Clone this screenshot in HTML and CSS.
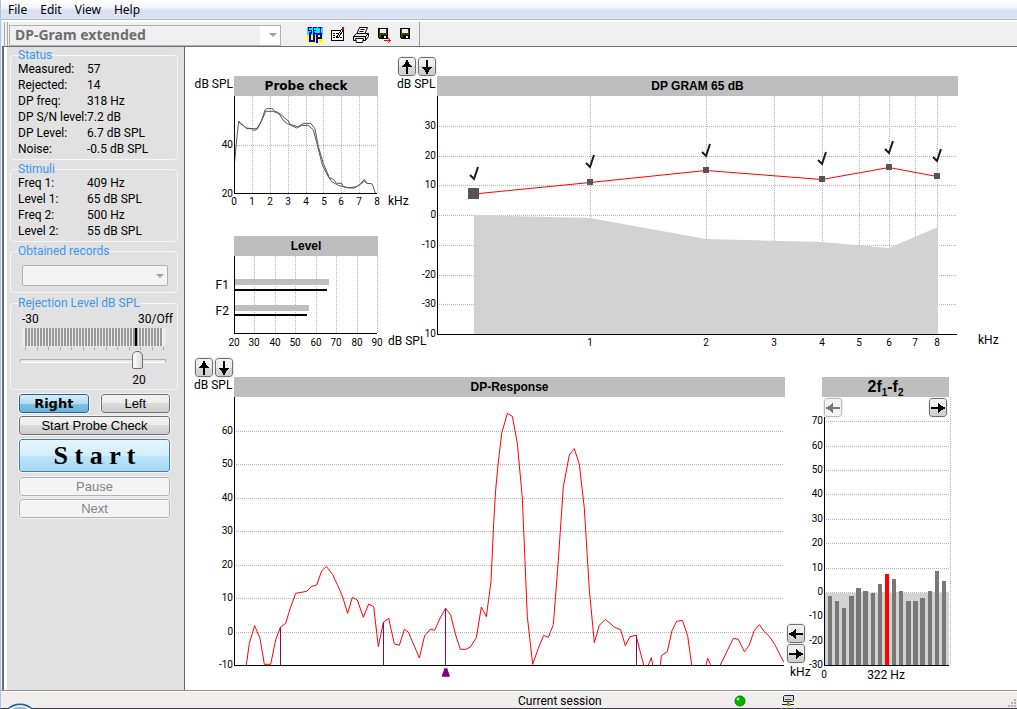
FILE: index.html
```html
<!DOCTYPE html>
<html lang="en">
<head>
<meta charset="utf-8">
<meta name="viewport" content="width=device-width, initial-scale=1">
<title>DP-Gram extended</title>
<link rel="stylesheet" href="styles.css">
</head>
<body>
<svg class="defs" aria-hidden="true">
  <symbol id="arrow-v" viewBox="0 0 16 16"><path d="M7 15V8H3V7h1V6h1V5h1V3h1V1h2v2h1v2h1v1h1v1h1v1H9v7z"/></symbol>
  <symbol id="arrow-h" viewBox="0 0 16 16"><path d="M15 7H8V3H7v1H6v1H5v1H3v1H1v2h2v1h2v1h1v1h1v1h1V9h7z"/></symbol>
</svg>

<nav class="menubar" aria-label="Main menu">
  <button type="button">File</button>
  <button type="button">Edit</button>
  <button type="button">View</button>
  <button type="button">Help</button>
</nav>

<div class="toolbar">
  <div class="combo combo-main">
    <select aria-label="Test type" disabled><option>DP-Gram extended</option></select>
    <span class="caret"></span>
  </div>
  <div class="tools">
    <button type="button" aria-label="Setup">
      <svg width="16" height="16" viewBox="0 0 16 16" shape-rendering="crispEdges"><path fill="#00f0ff" d="M0 0h16v8H0z"/><path fill="#ff0" d="M0 8h16v8H0z"/><path fill="none" stroke="#0000a8" stroke-width="1" d="M4.5.5h-3v3h3v3h-3M6 .5h3.500M6 .5v6h4M6 3.500h3M11 .5h4M13 .5v6"/><path fill="none" stroke="#0000c0" stroke-width="2" d="M3 5v9h4V5M10 16V7h4v4h-4"/></svg>
    </button>
    <button type="button" aria-label="Edit report">
      <svg width="16" height="16" viewBox="0 0 16 16" shape-rendering="crispEdges"><path fill="#fff" stroke="#000" d="M1.500 3.500h12v10h-12z"/><path stroke="#000" d="M3 6.500h2m1 0h2M3 8.500h2M3 10.500h2m5 0h2"/><path stroke="#000" stroke-width="3" d="M13 2L7 11"/><path stroke="#ffef60" d="M12.500 2.500L8 9.500"/><path fill="#e00000" d="M12 0h2v3h-2z"/></svg>
    </button>
    <button type="button" aria-label="Print">
      <svg width="17" height="16" viewBox="0 0 17 16"><path fill="#fff" stroke="#000" d="M4 6.500L6.500.5h8L12 6.500z"/><path stroke="#000" d="M7.500 2.500h4M6.500 4.500h4"/><path fill="#e4e4e4" stroke="#000" d="M.5 9.500l3-3h12v3l-3 4H.5z"/><path fill="none" stroke="#000" d="M1 9.500h11.500v4M12.500 9.500l3-3"/><path fill="#fff" stroke="#000" d="M2.500 11.500h8l-1 4h-6z"/></svg>
    </button>
    <button type="button" aria-label="Save as">
      <svg width="16" height="16" viewBox="0 0 16 16" shape-rendering="crispEdges"><path fill="#444400" stroke="#000" d="M1.500 1.500h9v10h-8l-1-1z"/><path fill="#eee" d="M3 2h6v4H3z"/><path fill="#000" d="M4 8h6v4H4z"/><path fill="#fff" d="M7 9h2v2H7z"/><path fill="none" stroke="red" d="M7 13.500h7M11 11l2.500 2.500L11 16"/></svg>
    </button>
    <button type="button" aria-label="Save">
      <svg width="12" height="16" viewBox="0 0 12 16" shape-rendering="crispEdges"><path fill="#444400" stroke="#000" d="M.5 1.500h9v10h-8l-1-1z"/><path fill="#eee" d="M2 2h6v4H2z"/><path fill="#000" d="M3 8h6v4H3z"/><path fill="#fff" d="M6 9h2v2H6z"/></svg>
    </button>
  </div>
</div>

<main class="workspace">
  <aside class="sidebar">
    <fieldset>
      <legend>Status</legend>
      <dl>
        <dt>Measured:</dt><dd>57</dd>
        <dt>Rejected:</dt><dd>14</dd>
        <dt>DP freq:</dt><dd>318 Hz</dd>
        <dt>DP S/N level:</dt><dd>7.2 dB</dd>
        <dt>DP Level:</dt><dd>6.7 dB SPL</dd>
        <dt>Noise:</dt><dd>-0.5 dB SPL</dd>
      </dl>
    </fieldset>
    <fieldset>
      <legend>Stimuli</legend>
      <dl>
        <dt>Freq 1:</dt><dd>409 Hz</dd>
        <dt>Level 1:</dt><dd>65 dB SPL</dd>
        <dt>Freq 2:</dt><dd>500 Hz</dd>
        <dt>Level 2:</dt><dd>55 dB SPL</dd>
      </dl>
    </fieldset>
    <fieldset class="records">
      <legend>Obtained records</legend>
      <div class="combo">
        <select aria-label="Obtained records" disabled><option></option></select>
        <span class="caret"></span>
      </div>
    </fieldset>
    <fieldset class="rejection">
      <legend><label for="rejection">Rejection Level dB SPL</label></legend>
      <div class="range-ends"><span>-30</span><span>30/Off</span></div>
      <div class="meter"><i></i></div>
      <div class="scale"><i></i><i></i><i></i><i></i><i></i><i></i><i></i><i></i><i></i><i></i><i></i><i></i><i></i></div>
      <input id="rejection" type="range" min="-30" max="30" value="20">
      <output for="rejection">20</output>
    </fieldset>
    <div class="actions">
      <button type="button" class="btn btn-on">Right</button>
      <button type="button" class="btn">Left</button>
      <button type="button" class="btn wide">Start Probe Check</button>
      <button type="button" class="btn wide btn-start">S t a r t</button>
      <button type="button" class="btn wide" disabled>Pause</button>
      <button type="button" class="btn wide" disabled>Next</button>
    </div>
  </aside>

  <div class="charts">
    <div class="row-top">
      <div class="left-stack">
        <section class="mini">
          <span class="unit-y">dB SPL</span>
          <h2 class="verdana">Probe check</h2>
          <svg class="plot" viewBox="0 0 144 114" role="img" aria-label="Probe check">
            <path class="grid" d="M18.500 0v97M36.500 0v97M54.500 0v97M72.500 0v97M89.500 0v97M107.500 0v97M125.500 0v97M143.500 0v97M1 49.500h142"/>
            <g class="probe" transform="scale(.33333) translate(-132 -138)">
              <path d="M134 335L140 270 146 213 150 220 170 234 185 236 193 242 203 236 215 210 225 180 230 176 248 176 253 184 265 187 295 213 302 226 320 234 328 227 342 220 362 220 375 236 385 290 400 340 418 383 430 388 440 400 455 400 460 410 475 414 500 410 512 401 523 388 530 400 545 401 550 410 556 430"/>
              <path d="M146 216L155 222 170 236 186 236 200 236 214 215 227 184 250 184 268 192 280 212 293 222 315 227 324 232 335 226 355 226 370 240 382 285 397 345 412 375 425 395 445 406 470 412 490 415 508 405 523 394 532 400"/>
            </g>
            <path class="axis" d="M.5 0V97.500H143"/>
            <g class="end"><text x="-1" y="52">40</text><text x="-1" y="101">20</text></g>
            <g class="mid"><text x="0" y="109">0</text><text x="18" y="109">1</text><text x="36" y="109">2</text><text x="54" y="109">3</text><text x="72" y="109">4</text><text x="90" y="109">5</text><text x="107" y="109">6</text><text x="125" y="109">7</text><text x="143" y="109">8</text></g>
          </svg>
          <span class="unit-x">kHz</span>
        </section>
        <section class="mini">
          <h2>Level</h2>
          <svg class="plot" viewBox="0 0 144 96" role="img" aria-label="Level">
            <path class="grid" d="M20.500 0v77M41.500 0v77M61.500 0v77M82.500 0v77M102.500 0v77M123.500 0v77M143.500 0v77"/>
            <path fill="#bebebe" d="M0 23h95v6H0zM0 49h75v6H0z"/>
            <path d="M0 33h93v2H0zM0 58h73v2H0z"/>
            <path class="axis" d="M.5 0V77.500H143"/>
            <g class="end label"><text x="-5" y="33">F1</text><text x="-5" y="59">F2</text></g>
            <g class="mid"><text x="0" y="90">20</text><text x="20" y="90">30</text><text x="41" y="90">40</text><text x="61" y="90">50</text><text x="82" y="90">60</text><text x="102" y="90">70</text><text x="123" y="90">80</text><text x="143" y="90">90</text></g>
          </svg>
          <span class="unit-x">dB SPL</span>
        </section>
      </div>

      <div class="side gram-side">
        <div class="pair">
          <button type="button" class="nudge" aria-label="Scale up"><svg><use href="#arrow-v"/></svg></button>
          <button type="button" class="nudge down" aria-label="Scale down"><svg><use href="#arrow-v"/></svg></button>
        </div>
        <span>dB SPL</span>
      </div>

      <section class="gram">
        <h2>DP GRAM 65 dB</h2>
        <svg class="plot" viewBox="0 0 521 256" role="img" aria-label="DP gram 65 dB">
          <path class="grid" d="M153.500 0v238M269.500 0v238M337.500 0v238M385.500 0v238M422.500 0v238M452.500 0v238M478.500 0v238M500.500 0v238M2 30.500h518M2 60.500h518M2 89.500h518M2 119.500h518M2 149.500h518M2 179.500h518M2 208.500h518"/>
          <path fill="#d2d2d2" d="M37 119L153 122 269 143 385 146 452 152 501 131V238H37z"/>
          <path fill="none" stroke="red" d="M37 98L153 86.500 269 74.500 385 83.500 452 71.500 500 80.500"/>
          <path fill="#555" d="M31 92h11v11H31zM150 83h6v6h-6zM266 71h6v6h-6zM382 80h6v6h-6zM449 68h6v6h-6zM497 77h6v6h-6z"/>
          <g fill="none" stroke="#1c1c1c" stroke-width="2">
            <path d="M33 79L37 83 38 80 41 71"/><path d="M149 67L153 71 154 68 157 59"/><path d="M265 56L269 60 270 57 273 48"/><path d="M381 64L385 68 386 65 389 56"/><path d="M448 53L452 57 453 54 456 45"/><path d="M496 61L500 65 501 62 504 53"/>
          </g>
          <path class="axis" d="M.5 0V238.500H520"/>
          <g class="end"><text x="-1" y="33">30</text><text x="-1" y="63">20</text><text x="-1" y="92">10</text><text x="-1" y="122">0</text><text x="-1" y="152">-10</text><text x="-1" y="182">-20</text><text x="-1" y="211">-30</text><text x="-1" y="241">10</text></g>
          <g class="mid"><text x="153" y="250">1</text><text x="269" y="250">2</text><text x="337" y="250">3</text><text x="385" y="250">4</text><text x="422" y="250">5</text><text x="452" y="250">6</text><text x="478" y="250">7</text><text x="500" y="250">8</text></g>
        </svg>
      </section>
      <span class="gram-unit">kHz</span>
    </div>

    <div class="row-bottom">
      <div class="side response-side">
        <div class="pair">
          <button type="button" class="nudge" aria-label="Scale up"><svg><use href="#arrow-v"/></svg></button>
          <button type="button" class="nudge down" aria-label="Scale down"><svg><use href="#arrow-v"/></svg></button>
        </div>
        <span>dB SPL</span>
      </div>
      <section class="response">
        <h2>DP-Response</h2>
        <svg class="plot" viewBox="0 0 551 285" role="img" aria-label="DP response spectrum">
          <path class="grid" d="M2 34.500h548M2 67.500h548M2 101.500h548M2 134.500h548M2 168.500h548M2 201.500h548M2 235.500h548"/>
          <g transform="scale(.33333) translate(-132 -81)">
            <path fill="none" stroke="red" stroke-width="3" d="M169 885L178 820 194 767 210 805 223 883 242 883 257 810 271 772 287 760 301 714 317 670 350 664 365 649 380 645 395 603 409 589 428 614 443 646 458 681 473 730 487 682 502 690 520 742 536 702 551 710 565 830 580 757 596 745 613 822 628 826 643 778 655 786 688 864 704 797 722 777 734 781 750 745 767 715 782 735 797 795 811 838 827 838 841 831 859 803 874 711 889 740 903 635 911 460 917 360 924 285 935 190 952 130 967 139 982 220 997 385 1012 740 1028 883 1045 835 1061 796 1075 802 1090 764 1105 570 1120 350 1138 255 1153 236 1168 283 1183 415 1198 660 1213 818 1228 766 1246 748 1274 772 1292 779 1306 827 1320 800 1338 796 1361 885M1375 885L1384 863 1388 885M1411 885L1414 857 1432 845 1446 782 1460 754 1477 751 1493 797 1505 885M1548 885L1553 865 1562 885M1591 885L1630 805 1645 808 1663 845 1677 827 1693 781 1708 764 1723 785 1738 799 1754 823 1781 876"/>
            <path stroke="purple" stroke-width="3" d="M271.500 772V885M580.500 757V885M766.500 715V885M1339.500 796V885"/>
            <path fill="purple" d="M763 895h9l3 10 4 10v5h-23v-5l4-10z"/>
          </g>
          <path class="axis" d="M.5 0V268.500H550"/>
          <g class="end"><text x="-1" y="37">60</text><text x="-1" y="70">50</text><text x="-1" y="104">40</text><text x="-1" y="137">30</text><text x="-1" y="171">20</text><text x="-1" y="204">10</text><text x="-1" y="238">0</text><text x="-1" y="271">-10</text></g>
        </svg>
      </section>
      <div class="side pan-side">
        <button type="button" class="nudge" aria-label="Pan left"><svg><use href="#arrow-h"/></svg></button>
        <button type="button" class="nudge right" aria-label="Pan right"><svg><use href="#arrow-h"/></svg></button>
        <span>kHz</span>
      </div>
      <section class="product">
        <h2>2f<sub>1</sub>-f<sub>2</sub></h2>
        <div class="pager">
          <button type="button" class="nudge" aria-label="Previous product" disabled><svg><use href="#arrow-h"/></svg></button>
          <button type="button" class="nudge right" aria-label="Next product"><svg><use href="#arrow-h"/></svg></button>
        </div>
        <svg class="plot" viewBox="0 0 127 265" role="img" aria-label="Distortion product levels">
          <path fill="#d2d2d2" d="M2 176h125v72H2z"/>
          <path class="grid" d="M4 4.500h123M4 29.500h123M4 53.500h123M4 77.500h123M4 102.500h123M4 126.500h123M4 151.500h123M4 175.500h123M128.500-20v268"/>
          <path fill="#787878" d="M6 179h4v69H6zM13 184h4v64h-4zM20 191h4v57h-4zM27 179h5v69h-5zM34 171h5v77h-5zM41 174h5v74h-5zM49 176h4v72h-4zM56 167h4v81h-4zM70 162h4v86h-4zM77 174h4v74h-4zM84 184h5v64h-5zM91 184h5v64h-5zM98 181h5v67h-5zM106 174h4v74h-4zM113 154h4v94h-4zM120 164h4v84h-4z"/>
          <path class="axis" d="M2.500 0V248.500H127"/>
          <path fill="red" d="M63 157h4v91h-4z"/>
          <g class="end"><text x="1" y="7">70</text><text x="1" y="32">60</text><text x="1" y="56">50</text><text x="1" y="80">40</text><text x="1" y="105">30</text><text x="1" y="129">20</text><text x="1" y="154">10</text><text x="1" y="178">0</text><text x="1" y="202">-10</text><text x="1" y="227">-20</text><text x="1" y="251">-30</text></g>
          <g class="mid"><text x="2" y="261">0</text><text class="big" x="64" y="262">322 Hz</text></g>
        </svg>
      </section>
    </div>
  </div>
</main>

<footer class="statusbar">
  <svg class="orb" width="32" height="6" viewBox="0 0 32 6" aria-hidden="true"><circle cx="16" cy="19" r="17.500" fill="#9fb8c8" stroke="#2c5f88" stroke-width="2"/><path d="M5 7Q16-1 27 7" fill="none" stroke="#dbe8f0" stroke-width="2"/></svg>
  <span class="session">Current session</span>
  <svg class="lamp" width="12" height="12" viewBox="0 0 12 12" role="img" aria-label="Connected"><circle cx="6" cy="6" r="5" fill="#00b400" stroke="#008000"/><circle cx="4" cy="4" r="1.500" fill="#8cff8c"/></svg>
  <svg class="device" width="13" height="12" viewBox="0 0 13 12" role="img" aria-label="Device"><path fill="#d8d8d8" stroke="#222" d="M1.500 1.500l1-1h9v5l-1 1h-9z"/><path stroke="#555" d="M3 4.500h6"/><path stroke="#222" d="M0 9.500h12M6 7v3"/><path fill="#a0a000" d="M5 8h3v3H5z"/></svg>
  <svg class="grip" width="9" height="9" viewBox="0 0 9 9" aria-hidden="true"><path fill="#b4b0b0" d="M6 0h2v2H6zM3 3h2v2H3zM6 3h2v2H6zM0 6h2v2H0zM3 6h2v2H3zM6 6h2v2H6z"/></svg>
</footer>
</body>
</html>
```

FILE: styles.css
```css
* { box-sizing: border-box; }

body {
  display: flex;
  flex-direction: column;
  min-height: 100vh;
  margin: 0;
  background: #f0f0f0;
  border-left: 1px solid #a9c4e4;
  border-bottom: 1px solid #303c48;
  color: #000;
  font: 12px/16px Roboto, "Liberation Sans", sans-serif;
}

button, select, input { margin: 0; font: inherit; color: inherit; }
.defs { display: none; }

.menubar {
  display: flex;
  gap: 13px;
  height: 20px;
  padding: 0 7px;
  background: linear-gradient(#fff, #f4f6fb 40%, #d9e0f1 55%, #dce3f4);
  border-bottom: 1px solid #b8bcc8;
}
.menubar button {
  padding: 0;
  border: 0;
  background: none;
  font: 12px/20px "Noto Sans", sans-serif;
}

.toolbar {
  display: flex;
  gap: 24px;
  height: 26px;
  padding-left: 8px;
  border-top: 2px solid #fff;
  background: linear-gradient(90deg, #f0f0f0 3px, #a8a8a8 3px 4px, #f0f0f0 4px 6px, #a8a8a8 6px 7px, #f0f0f0 7px);
}
.tools {
  display: flex;
  gap: 7px;
  padding: 2px 7px 0 2px;
  border-right: 1px solid #a0a0a0;
}
.tools button { padding: 0; border: 0; background: none; }
.tools svg { display: block; }

.combo { display: grid; align-items: center; }
.combo > * { grid-area: 1 / 1; }
.combo select {
  appearance: none;
  width: 100%;
  height: 21px;
  padding: 0 5px;
  border: 1px solid #adb2b5;
  border-radius: 2px;
  background: #f4f4f4;
  opacity: 1;
}
.caret {
  justify-self: end;
  margin-right: 4px;
  border: 4px solid transparent;
  border-top-color: #a0a0a0;
  border-bottom: 0;
}
.combo-main { width: 272px; padding-top: 2px; }
.combo-main select {
  border-radius: 0;
  background: linear-gradient(90deg, #f0f0f0 250px, #fff 250px);
  color: #6d6d6d;
  font: bold 14px/18px "Noto Sans", sans-serif;
}

.workspace {
  display: flex;
  flex: 1;
  margin-left: 1px;
  border: solid #6e6e6e;
  border-width: 1px 0 0 2px;
  background: #fff;
}

.sidebar {
  flex: none;
  width: 181px;
  padding: 2px 6px 0 3px;
  border-left: 3px solid #fff;
  border-right: 1px solid #666;
  background: #e1e1e1;
}
fieldset {
  min-width: 0;
  margin: 0 0 3px;
  padding: 0 7px 2px;
  border: 1px solid #f4f8fb;
  border-radius: 4px;
}
legend { padding: 0; line-height: 12px; color: #3d97f5; }
dl { display: grid; grid-template-columns: 69px 1fr; margin: 0; white-space: nowrap; }
dd { margin: 0; }

.records { margin-bottom: 4px; padding: 8px 9px 6px 11px; }
.records legend, .rejection legend { margin-left: -4px; }
.rejection { padding: 1px 4px 0 11px; }
.range-ends { display: flex; justify-content: space-between; line-height: 18px; }
.meter {
  height: 18px;
  margin-right: 7px;
  background: repeating-linear-gradient(90deg, #999 0 2px, #ececec 2px 3px);
  border: solid #ececec;
  border-width: 0 3px;
}
.meter i { display: block; width: 2px; height: 100%; margin-left: 80%; background: #000; }
.scale {
  display: flex;
  justify-content: space-between;
  margin: 1px 9px 0 3px;
}
.scale i { width: 1px; height: 3px; background: #aaa; }
#rejection {
  appearance: none;
  display: block;
  width: 146px;
  height: 22px;
  margin: 0 0 0 -2px;
  background: none;
}
#rejection::-webkit-slider-runnable-track {
  height: 4px;
  border: 1px solid #b0b0b0;
  border-bottom-color: #fff;
  background: #e8eaea;
}
#rejection::-webkit-slider-thumb {
  appearance: none;
  width: 11px;
  height: 18px;
  margin-top: -9px;
  border: 1px solid #707070;
  border-radius: 5px 5px 2px 2px;
  background: linear-gradient(90deg, #fff, #d8d8d8);
}
output { display: block; width: 130px; padding-left: 104px; text-align: center; line-height: 17px; }

.actions {
  display: grid;
  grid-template-columns: 1fr 1fr;
  gap: 3px 12px;
  padding: 1px 8px 0 9px;
}
.btn {
  height: 19px;
  padding: 0;
  border: 1px solid #707070;
  border-radius: 3px;
  outline: 1px solid #f3f3f3;
  background: linear-gradient(#f3f3f3, #ebebeb 50%, #dadada 50%, #cdcdcd);
  font: 13px/16px "Liberation Sans", sans-serif;
}
.btn:disabled { border-color: #adb2b5; background: #f4f4f4; color: #838383; }
.wide { grid-column: 1 / -1; }
.btn-on {
  border: 1px solid #2c628b;
  background: linear-gradient(#d4ecf8, #b5dcf2 50%, #85c2e6 50%, #68b3db);
  font: bold 13px/16px "DejaVu Sans", sans-serif;
}
.btn-start {
  height: 33px;
  margin: 1px 0 2px;
  border-color: #3c7fb1;
  background: linear-gradient(#e8f5fd, #d4edfc 50%, #bce5fc 50%, #a7d9f5);
  font: bold 26px/30px "Liberation Serif", serif;
}

.charts { flex: 1; min-width: 0; padding-top: 9px; }
h2 {
  margin: 0;
  height: 20px;
  background: #bebebe;
  text-align: center;
  font: bold 12px/20px "Liberation Sans", sans-serif;
}
.verdana { font: bold 12px/20px "DejaVu Sans", sans-serif; }

.plot { display: block; width: 100%; height: auto; overflow: visible; }
.plot text { font: 10px Roboto, sans-serif; }
.plot .label text, .plot .big { font-size: 12px; }
.end { text-anchor: end; }
.mid { text-anchor: middle; }
.grid { fill: none; stroke: #b4b4b4; stroke-dasharray: 1 1; shape-rendering: crispEdges; }
.axis { fill: none; stroke: #000; shape-rendering: crispEdges; }
.probe { fill: none; stroke: #555; stroke-width: 3; }

.row-top {
  display: grid;
  grid-template-columns: 49px 144fr 59px 521fr 59px;
}
.left-stack { grid-area: 1 / 1 / 2 / 4; display: grid; gap: 26px; align-content: start; padding-top: 20px; }
.mini { display: grid; grid-template-columns: 49px 1fr 59px; grid-template-rows: 20px auto; }
.mini h2 { grid-area: 1 / 2; }
.mini .plot { grid-area: 2 / 2; }
.unit-y { grid-area: 1 / 1; padding-right: 1px; text-align: right; }
.unit-x { grid-area: 2 / 3; align-self: end; padding: 0 0 1px 10px; }
.mini + .mini .unit-x { padding-bottom: 3px; }

.side { display: flex; flex-direction: column; }
.side span { white-space: nowrap; }
.pair { display: flex; gap: 2px; height: 20px; padding: 1px 0 0 1px; }
.gram-side { grid-area: 1 / 3; align-self: start; padding-left: 19px; }
.gram { grid-area: 1 / 4; padding-top: 20px; }
.gram-unit { grid-area: 1 / 5; align-self: end; padding: 0 0 4px 20px; }

.row-bottom {
  display: grid;
  grid-template-columns: 49px 551fr 37px 127fr 68px;
  padding-top: 5px;
}
.response-side { padding-left: 9px; }
.response, .product { padding-top: 20px; }
.pan-side { justify-content: flex-end; gap: 1px; padding: 0 0 2px 2px; }
.pan-side span { padding-left: 3px; }

.product h2 { font-size: 16px; }
sub { font-size: 10px; line-height: 10px; }
.pager { display: flex; justify-content: space-between; height: 20px; padding: 1px 2px; }

.nudge {
  display: block;
  width: 18px;
  height: 19px;
  padding: 1px 0;
  border: 1px solid #707070;
  border-radius: 3px;
  outline: 1px solid #efefef;
  background: linear-gradient(#f3f3f3, #ebebeb 50%, #dadada 50%, #cdcdcd);
}
.nudge svg { display: block; width: 16px; height: 16px; }
.nudge:disabled { border-color: #b8bcbe; background: #f4f4f4; fill: #777; }
.down svg { transform: rotate(180deg); }
.right svg { transform: rotate(180deg); }

.statusbar {
  display: grid;
  grid-template-columns: 508fr 216fr 48fr 235fr;
  align-items: center;
  height: 18px;
  padding: 3px 0 0 9px;
  border-top: 1px solid #909090;
  background: #f0edec;
  box-shadow: inset 0 1px #fff;
}
.orb { position: absolute; left: 4px; bottom: 0; }
.session { grid-column: 2; line-height: 14px; }
.lamp { grid-area: 1 / 3; }
.device { grid-area: 1 / 4; }
.grip { grid-area: 1 / 4; justify-self: end; align-self: end; }
```
